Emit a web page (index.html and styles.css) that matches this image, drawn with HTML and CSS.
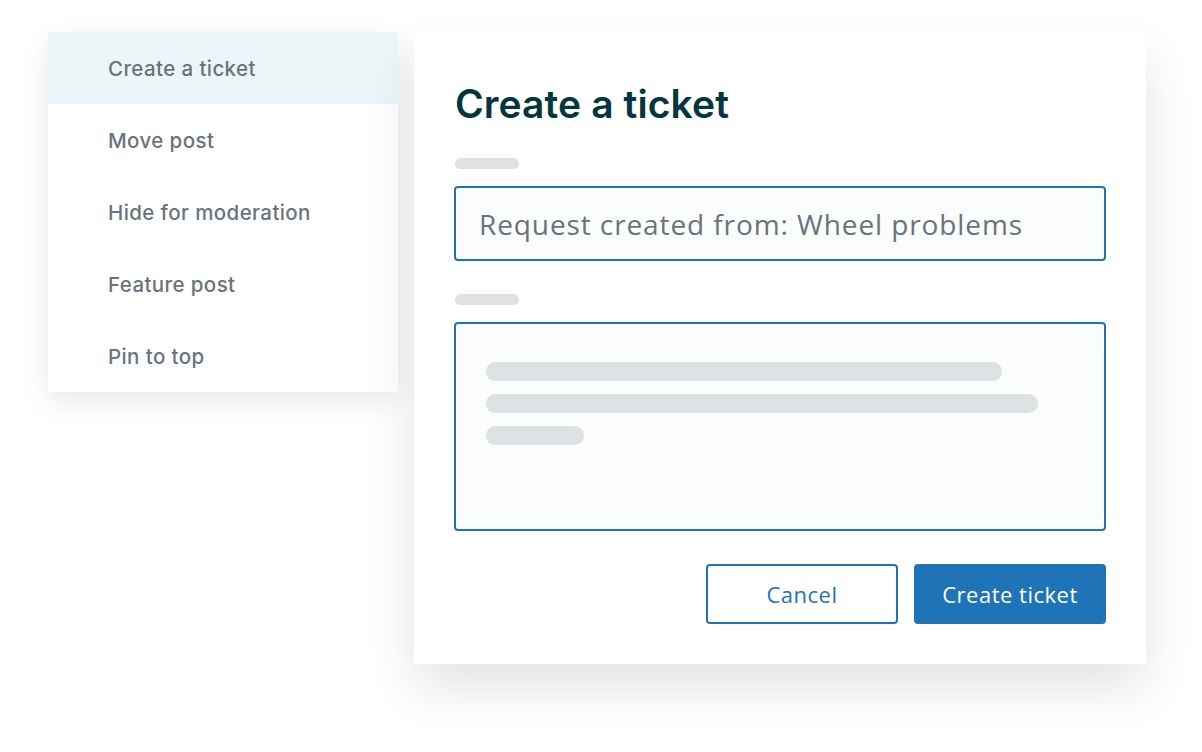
FILE: index.html
```html
<!DOCTYPE html>
<html lang="en">
<head>
  <meta charset="UTF-8" />
  <title>Create a ticket</title>
  <meta name="viewport" content="width=device-width, initial-scale=1.0" />
  <link rel="stylesheet" href="styles.css">
</head>
<body>
  <ul class="menu">
    <li class="menu-item active">Create a ticket</li>
    <li class="menu-item">Move post</li>
    <li class="menu-item">Hide for moderation</li>
    <li class="menu-item">Feature post</li>
    <li class="menu-item">Pin to top</li>
  </ul>

  <div class="dialog">
    <h1>Create a ticket</h1>

    <div class="label-bar"></div>
    <div class="input">Request created from: Wheel problems</div>

    <div class="label-bar"></div>
    <div class="textarea">
      <div class="line" style="width: 516px"></div>
      <div class="line" style="width: 552px"></div>
      <div class="line" style="width: 98px"></div>
    </div>

    <div class="actions">
      <button class="btn btn-ghost">Cancel</button>
      <button class="btn btn-primary">Create ticket</button>
    </div>
  </div>
</body>
</html>
```

FILE: styles.css
```css
:root {
  --blue: #1f73b7;
  --ink: #03363d;
  --muted: #68737d;
  --skeleton: #dfe2e5;
  --field-bg: #fbfcfc;
}
html, body {
  height: 100%;
}
body {
  margin: 0;
  padding: 32px 0 0 48px;
  box-sizing: border-box;
  background: #fff;
  display: flex;
  align-items: flex-start;
  gap: 16px;
  font-family: "Open Sans", "Liberation Sans", sans-serif;
  color: var(--muted);
}
.menu {
  list-style: none;
  margin: 0;
  padding: 0;
  width: 350px;
  background: #fff;
  border-radius: 4px;
  overflow: hidden;
  box-shadow: 0 10px 30px rgba(0, 0, 0, 0.09);
}
.menu-item {
  height: 72px;
  display: flex;
  align-items: center;
  padding-left: 60px;
  font-family: "Inter", "Lato", sans-serif;
  font-size: 20.5px;
  font-weight: 500;
  letter-spacing: 0.4px;
  color: var(--muted);
}
.menu-item.active {
  background: #eaf6f8;
}
.dialog {
  width: 732px;
  box-sizing: border-box;
  padding: 48px 40px 40px;
  background: #fff;
  box-shadow: 0 24px 48px rgba(0, 0, 0, 0.11);
}
h1 {
  margin: 0 0 30px 1px;
  font-family: "Inter", "Lato", sans-serif;
  font-size: 39px;
  font-weight: 600;
  letter-spacing: 0.1px;
  line-height: 48px;
  color: var(--ink);
}
.label-bar {
  width: 64px;
  height: 11px;
  margin-left: 1px;
  border-radius: 6px;
  background: var(--skeleton);
  margin-bottom: 17px;
}
.input {
  height: 75px;
  box-sizing: border-box;
  border: 2px solid var(--blue);
  border-radius: 4px;
  background: var(--field-bg);
  display: flex;
  align-items: center;
  padding-left: 23px;
  font-size: 28px;
  letter-spacing: 0.9px;
  color: var(--muted);
  margin-bottom: 33px;
}
.textarea {
  height: 209px;
  box-sizing: border-box;
  border: 2px solid var(--blue);
  border-radius: 4px;
  background: var(--field-bg);
  padding: 38px 30px;
  display: flex;
  flex-direction: column;
  gap: 13px;
}
.line {
  height: 19px;
  border-radius: 10px;
  background: var(--skeleton);
}
.actions {
  display: flex;
  justify-content: flex-end;
  gap: 16px;
  margin-top: 33px;
}
.btn {
  width: 192px;
  height: 60px;
  border-radius: 4px;
  font-family: "Open Sans", "Liberation Sans", sans-serif;
  font-size: 22px;
  letter-spacing: 0.5px;
  cursor: pointer;
}
.btn-ghost {
  background: #fff;
  border: 2px solid var(--blue);
  color: var(--blue);
}
.btn-primary {
  background: var(--blue);
  border: none;
  color: #fff;
}
```
